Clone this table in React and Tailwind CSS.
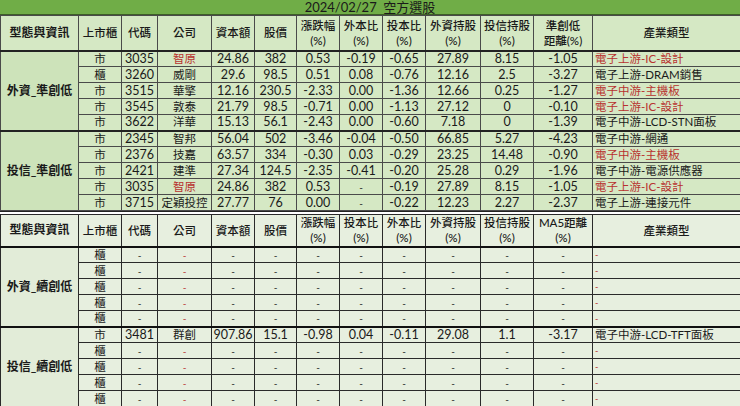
import React from "react";

// column widths (px), 13 columns
const widths = [78, 43, 36, 54, 43, 42, 43, 43, 43, 55, 53, 59, 148];

const RED = "text-[#b8312f]";

const topGroups = [
  {
    name: "外資_準創低",
    rows: [
      ["市", "3035", "智原", "24.86", "382", "0.53", "-0.19", "-0.65", "27.89", "8.15", "-1.05", "電子上游-IC-設計", true, true],
      ["櫃", "3260", "威剛", "29.6", "98.5", "0.51", "0.08", "-0.76", "12.16", "2.5", "-3.27", "電子上游-DRAM銷售", false, false],
      ["市", "3515", "華擎", "12.16", "230.5", "-2.33", "0.00", "-1.36", "12.66", "0.25", "-1.27", "電子中游-主機板", false, true],
      ["市", "3545", "敦泰", "21.79", "98.5", "-0.71", "0.00", "-1.13", "27.12", "0", "-0.10", "電子上游-IC-設計", false, true],
      ["市", "3622", "洋華", "15.13", "56.1", "-2.43", "0.00", "-0.60", "7.18", "0", "-1.39", "電子中游-LCD-STN面板", false, false],
    ],
  },
  {
    name: "投信_準創低",
    rows: [
      ["市", "2345", "智邦", "56.04", "502", "-3.46", "-0.04", "-0.50", "66.85", "5.27", "-4.23", "電子中游-網通", false, false],
      ["市", "2376", "技嘉", "63.57", "334", "-0.30", "0.03", "-0.29", "23.25", "14.48", "-0.90", "電子中游-主機板", false, true],
      ["市", "2421", "建準", "27.34", "124.5", "-2.35", "-0.41", "-0.20", "25.28", "0.29", "-1.96", "電子中游-電源供應器", false, false],
      ["市", "3035", "智原", "24.86", "382", "0.53", "-", "-0.19", "27.89", "8.15", "-1.05", "電子上游-IC-設計", true, true],
      ["市", "3715", "定穎投控", "27.77", "76", "0.00", "-", "-0.22", "12.23", "2.27", "-2.37", "電子上游-連接元件", false, false],
    ],
  },
];

const dashRow = ["櫃", "-", "-", "-", "-", "-", "-", "-", "-", "-", "-", "-"];

const bottomGroups = [
  { name: "外資_續創低", rows: [dashRow, dashRow, dashRow, dashRow, dashRow] },
  {
    name: "投信_續創低",
    rows: [
      ["市", "3481", "群創", "907.86", "15.1", "-0.98", "0.04", "-0.11", "29.08", "1.1", "-3.17", "電子中游-LCD-TFT面板"],
      dashRow,
      dashRow,
      dashRow,
      dashRow,
    ],
  },
];

const topHeads = ["上市櫃", "代碼", "公司", "資本額", "股價", ["漲跌幅", "(%)"], ["外本比", "(%)"], ["投本比", "(%)"], ["外資持股", "(%)"], ["投信持股", "(%)"], ["準創低", "距離(%)"], "產業類型"];
const bottomHeads = ["上市櫃", "代碼", "公司", "資本額", "股價", ["漲跌幅", "(%)"], ["投本比", "(%)"], ["外本比", "(%)"], ["外資持股", "(%)"], ["投信持股", "(%)"], ["MA5距離", "(%)"], "產業類型"];

const Cols = () => (
  <colgroup>
    {widths.map((w, i) => (
      <col key={i} style={{ width: w }} />
    ))}
  </colgroup>
);

const HeadRow = ({ heads, bg, line, h }) => (
  <tr className={h}>
    <th className={`border ${line} ${bg} font-bold text-[12px] text-[#1a1a1a]`}>型態與資訊</th>
    {heads.map((hd, i) => (
      <th key={i} className={`border ${line} ${bg} font-medium text-[11.5px] leading-[15px] text-[#1a1a1a]`}>
        {Array.isArray(hd) ? (
          <>
            {hd[0]}
            <br />
            {hd[1]}
          </>
        ) : (
          hd
        )}
      </th>
    ))}
  </tr>
);

const Table = ({ groups, heads, bg, sideBg, line, sep, headH, rowH, bottom }) => (
  <table className="w-[740px] table-fixed border-collapse">
    <Cols />
    <thead>
      <HeadRow heads={heads} bg={bg} line={line} h={headH} />
    </thead>
    <tbody>
      {groups.map((g, gi) =>
        g.rows.map((r, ri) => (
          <tr key={`${gi}-${ri}`} className={`${rowH} ${ri === 0 ? sep : ""}`}>
            {ri === 0 && (
              <td rowSpan={g.rows.length} className={`border ${line} ${sideBg} ${sep} text-center font-bold text-[12px] text-[#1a1a1a]`}>
                {g.name}
              </td>
            )}
            {r.slice(0, 11).map((v, ci) => {
              const red = ci === 2 && (r[12] || (bottom && v === "-"));
              return (
                <td
                  key={ci}
                  className={`border ${line} ${bg} ${ri === 0 ? sep : ""} p-0 text-center leading-[14px] whitespace-nowrap ${
                    v === "-" ? "text-[10px]" : ci === 0 || ci === 2 ? "text-[11.5px]" : "text-[12.5px]"
                  } ${red ? RED : "text-[#1a1a1a]"}`}
                >
                  {v}
                </td>
              );
            })}
            <td
              className={`border ${line} ${bg} ${ri === 0 ? sep : ""} p-0 pl-[2px] text-left leading-[14px] whitespace-nowrap ${
                r[11] === "-" ? `text-[9px] align-bottom ${RED}` : `text-[11.5px] ${r[13] ? RED : "text-[#1a1a1a]"}`
              }`}
            >
              {r[11]}
            </td>
          </tr>
        ))
      )}
    </tbody>
  </table>
);

export default function App() {
  return (
    <div
      className="w-[740px] h-[406px] overflow-hidden bg-white"
      style={{ fontFamily: 'Lato, "Noto Sans CJK TC", sans-serif' }}
    >
      <div className="h-[15px] bg-[#70ad47] border-b border-[#3d5e28] flex items-center justify-center text-[13px] leading-[14px] text-[#1a1a1a]">
        2024/02/27&nbsp;&nbsp;空方選股
      </div>
      <Table
        groups={topGroups}
        heads={topHeads}
        bg="bg-[#d5e8c4]"
        sideBg="bg-[#cde3ba]"
        line="border-[#4a4a4a]"
        sep="border-t-2 border-t-[#222]"
        headH="h-[35px]"
        rowH="h-[16px]"
      />
      <div className="h-[3px] bg-white border-t border-[#222]" />
      <Table
        groups={bottomGroups}
        heads={bottomHeads}
        bg="bg-[#e7efdf]"
        sideBg="bg-[#e2ecd8]"
        line="border-[#2a2a2a]"
        sep="border-t-2 border-t-[#111]"
        headH="h-[32px]"
        rowH="h-[16px]"
        bottom
      />
    </div>
  );
}
